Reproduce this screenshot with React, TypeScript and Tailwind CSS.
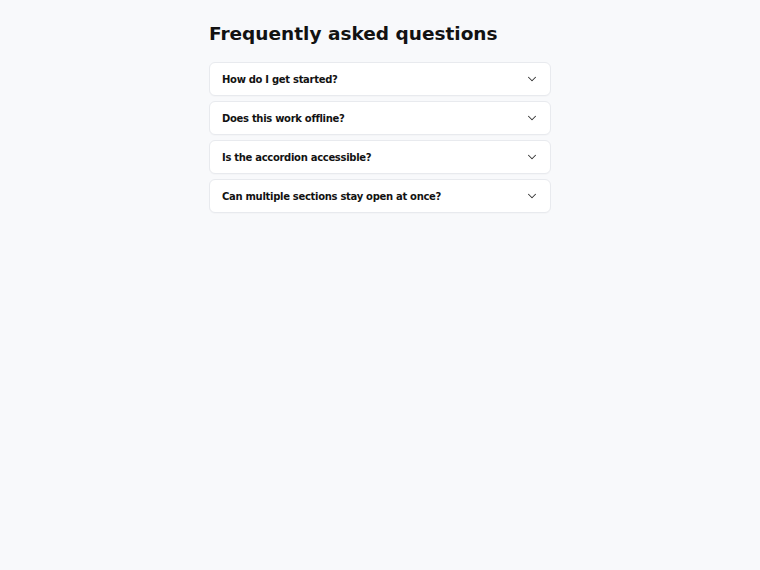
import { ChevronDown } from "lucide-react";

const questions = [
	"How do I get started?",
	"Does this work offline?",
	"Is the accordion accessible?",
	"Can multiple sections stay open at once?",
];

export default function App() {
	return (
		<div
			className="min-h-screen bg-[#f8f9fb] text-[#121212]"
			style={{ fontFamily: '"DejaVu Sans", sans-serif' }}
		>
			<div className="mx-auto w-[342px] pt-[21px]">
				<h1 className="text-[18.5px] leading-[26px] font-bold mb-[15px]">
					Frequently asked questions
				</h1>
				<div className="flex flex-col gap-[5px]">
					{questions.map((q) => (
						<button
							key={q}
							type="button"
							className="flex items-center justify-between w-full bg-white border border-[#e8eaee] rounded-md pl-3 pr-[11px] py-1.5 text-left shadow-[0_1px_1px_rgba(0,0,0,0.02)]"
						>
							<span className="text-[10px] leading-5 font-bold tracking-[-0.3px] translate-y-[1px]">
								{q}
							</span>
							<ChevronDown className="w-3.5 h-3.5 text-[#333]" strokeWidth={1.75} />
						</button>
					))}
				</div>
			</div>
		</div>
	);
}
